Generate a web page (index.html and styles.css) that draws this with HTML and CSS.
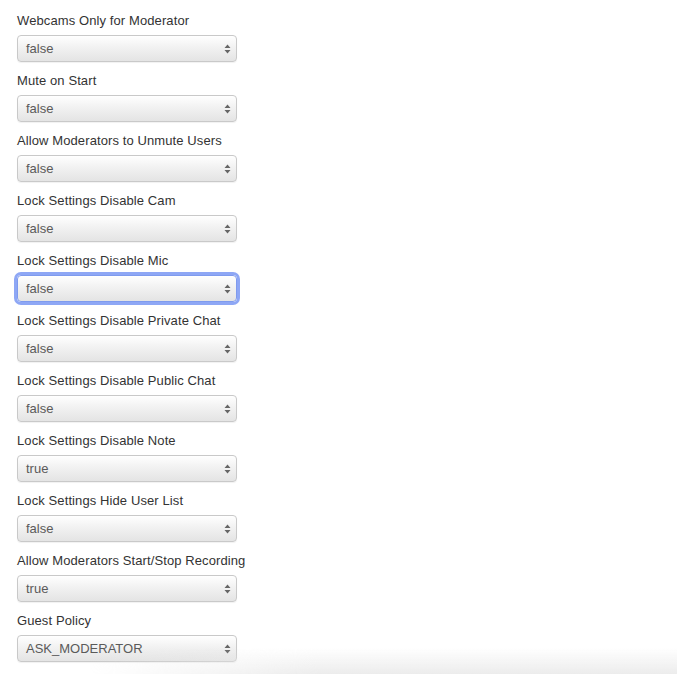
FILE: index.html
```html
<!DOCTYPE html>
<html>
<head>
<meta charset="utf-8">
<link rel="stylesheet" href="styles.css">
</head>
<body>
<div class="form">
  <div class="field"><div class="label">Webcams Only for Moderator</div><div class="select"><span>false</span><svg class="arrows" width="7" height="10" viewBox="0 0 7 10"><path d="M3.5 0.5 L6.5 4 L0.5 4 Z M0.5 6 L6.5 6 L3.5 9.5 Z" fill="#666"/></svg></div></div>
  <div class="field"><div class="label">Mute on Start</div><div class="select"><span>false</span><svg class="arrows" width="7" height="10" viewBox="0 0 7 10"><path d="M3.5 0.5 L6.5 4 L0.5 4 Z M0.5 6 L6.5 6 L3.5 9.5 Z" fill="#666"/></svg></div></div>
  <div class="field"><div class="label">Allow Moderators to Unmute Users</div><div class="select"><span>false</span><svg class="arrows" width="7" height="10" viewBox="0 0 7 10"><path d="M3.5 0.5 L6.5 4 L0.5 4 Z M0.5 6 L6.5 6 L3.5 9.5 Z" fill="#666"/></svg></div></div>
  <div class="field"><div class="label">Lock Settings Disable Cam</div><div class="select"><span>false</span><svg class="arrows" width="7" height="10" viewBox="0 0 7 10"><path d="M3.5 0.5 L6.5 4 L0.5 4 Z M0.5 6 L6.5 6 L3.5 9.5 Z" fill="#666"/></svg></div></div>
  <div class="field"><div class="label">Lock Settings Disable Mic</div><div class="select focused"><span>false</span><svg class="arrows" width="7" height="10" viewBox="0 0 7 10"><path d="M3.5 0.5 L6.5 4 L0.5 4 Z M0.5 6 L6.5 6 L3.5 9.5 Z" fill="#666"/></svg></div></div>
  <div class="field"><div class="label">Lock Settings Disable Private Chat</div><div class="select"><span>false</span><svg class="arrows" width="7" height="10" viewBox="0 0 7 10"><path d="M3.5 0.5 L6.5 4 L0.5 4 Z M0.5 6 L6.5 6 L3.5 9.5 Z" fill="#666"/></svg></div></div>
  <div class="field"><div class="label">Lock Settings Disable Public Chat</div><div class="select"><span>false</span><svg class="arrows" width="7" height="10" viewBox="0 0 7 10"><path d="M3.5 0.5 L6.5 4 L0.5 4 Z M0.5 6 L6.5 6 L3.5 9.5 Z" fill="#666"/></svg></div></div>
  <div class="field"><div class="label">Lock Settings Disable Note</div><div class="select"><span>true</span><svg class="arrows" width="7" height="10" viewBox="0 0 7 10"><path d="M3.5 0.5 L6.5 4 L0.5 4 Z M0.5 6 L6.5 6 L3.5 9.5 Z" fill="#666"/></svg></div></div>
  <div class="field"><div class="label">Lock Settings Hide User List</div><div class="select"><span>false</span><svg class="arrows" width="7" height="10" viewBox="0 0 7 10"><path d="M3.5 0.5 L6.5 4 L0.5 4 Z M0.5 6 L6.5 6 L3.5 9.5 Z" fill="#666"/></svg></div></div>
  <div class="field"><div class="label">Allow Moderators Start/Stop Recording</div><div class="select"><span>true</span><svg class="arrows" width="7" height="10" viewBox="0 0 7 10"><path d="M3.5 0.5 L6.5 4 L0.5 4 Z M0.5 6 L6.5 6 L3.5 9.5 Z" fill="#666"/></svg></div></div>
  <div class="field"><div class="label">Guest Policy</div><div class="select"><span>ASK_MODERATOR</span><svg class="arrows" width="7" height="10" viewBox="0 0 7 10"><path d="M3.5 0.5 L6.5 4 L0.5 4 Z M0.5 6 L6.5 6 L3.5 9.5 Z" fill="#666"/></svg></div></div>
</div>
<div class="bottom-shade"></div>
</body>
</html>
```

FILE: styles.css
```css
html, body {
  margin: 0;
  padding: 0;
  background: #fff;
}
body {
  font-family: "Liberation Sans", Arial, Helvetica, sans-serif;
  font-size: 13px;
  color: #333;
  height: 674px;
  overflow: hidden;
}
.form {
  padding: 11px 0 0 17px;
  display: flex;
  flex-direction: column;
}
.field {
  display: flex;
  flex-direction: column;
  margin-bottom: 9px;
}
.label {
  line-height: 20px;
  height: 20px;
  margin-bottom: 4px;
  color: #333;
  letter-spacing: 0.1px;
}
.select {
  box-sizing: border-box;
  width: 220px;
  height: 27px;
  border: 1px solid #c9c9c9;
  border-radius: 4px;
  background: linear-gradient(to bottom, #ffffff 0%, #f3f3f3 40%, #e4e4e4 100%);
  box-shadow: 0 1px 1px rgba(0,0,0,0.06);
  display: flex;
  align-items: center;
  justify-content: space-between;
  padding: 0 5px 0 8px;
  color: #5a5a5a;
  font-size: 13px;
}
.select.focused {
  border-color: #7f9bee;
  box-shadow: 0 0 0 3px #8ea7f5;
}
.arrows {
  display: block;
}
.bottom-shade {
  position: fixed;
  left: 0;
  right: 0;
  bottom: 0;
  height: 26px;
  background: linear-gradient(to bottom, rgba(236,236,236,0) 0%, rgba(236,236,236,1) 100%);
  -webkit-mask-image: linear-gradient(to right, transparent 90px, #000 320px);
  mask-image: linear-gradient(to right, transparent 90px, #000 320px);
  pointer-events: none;
}
```
